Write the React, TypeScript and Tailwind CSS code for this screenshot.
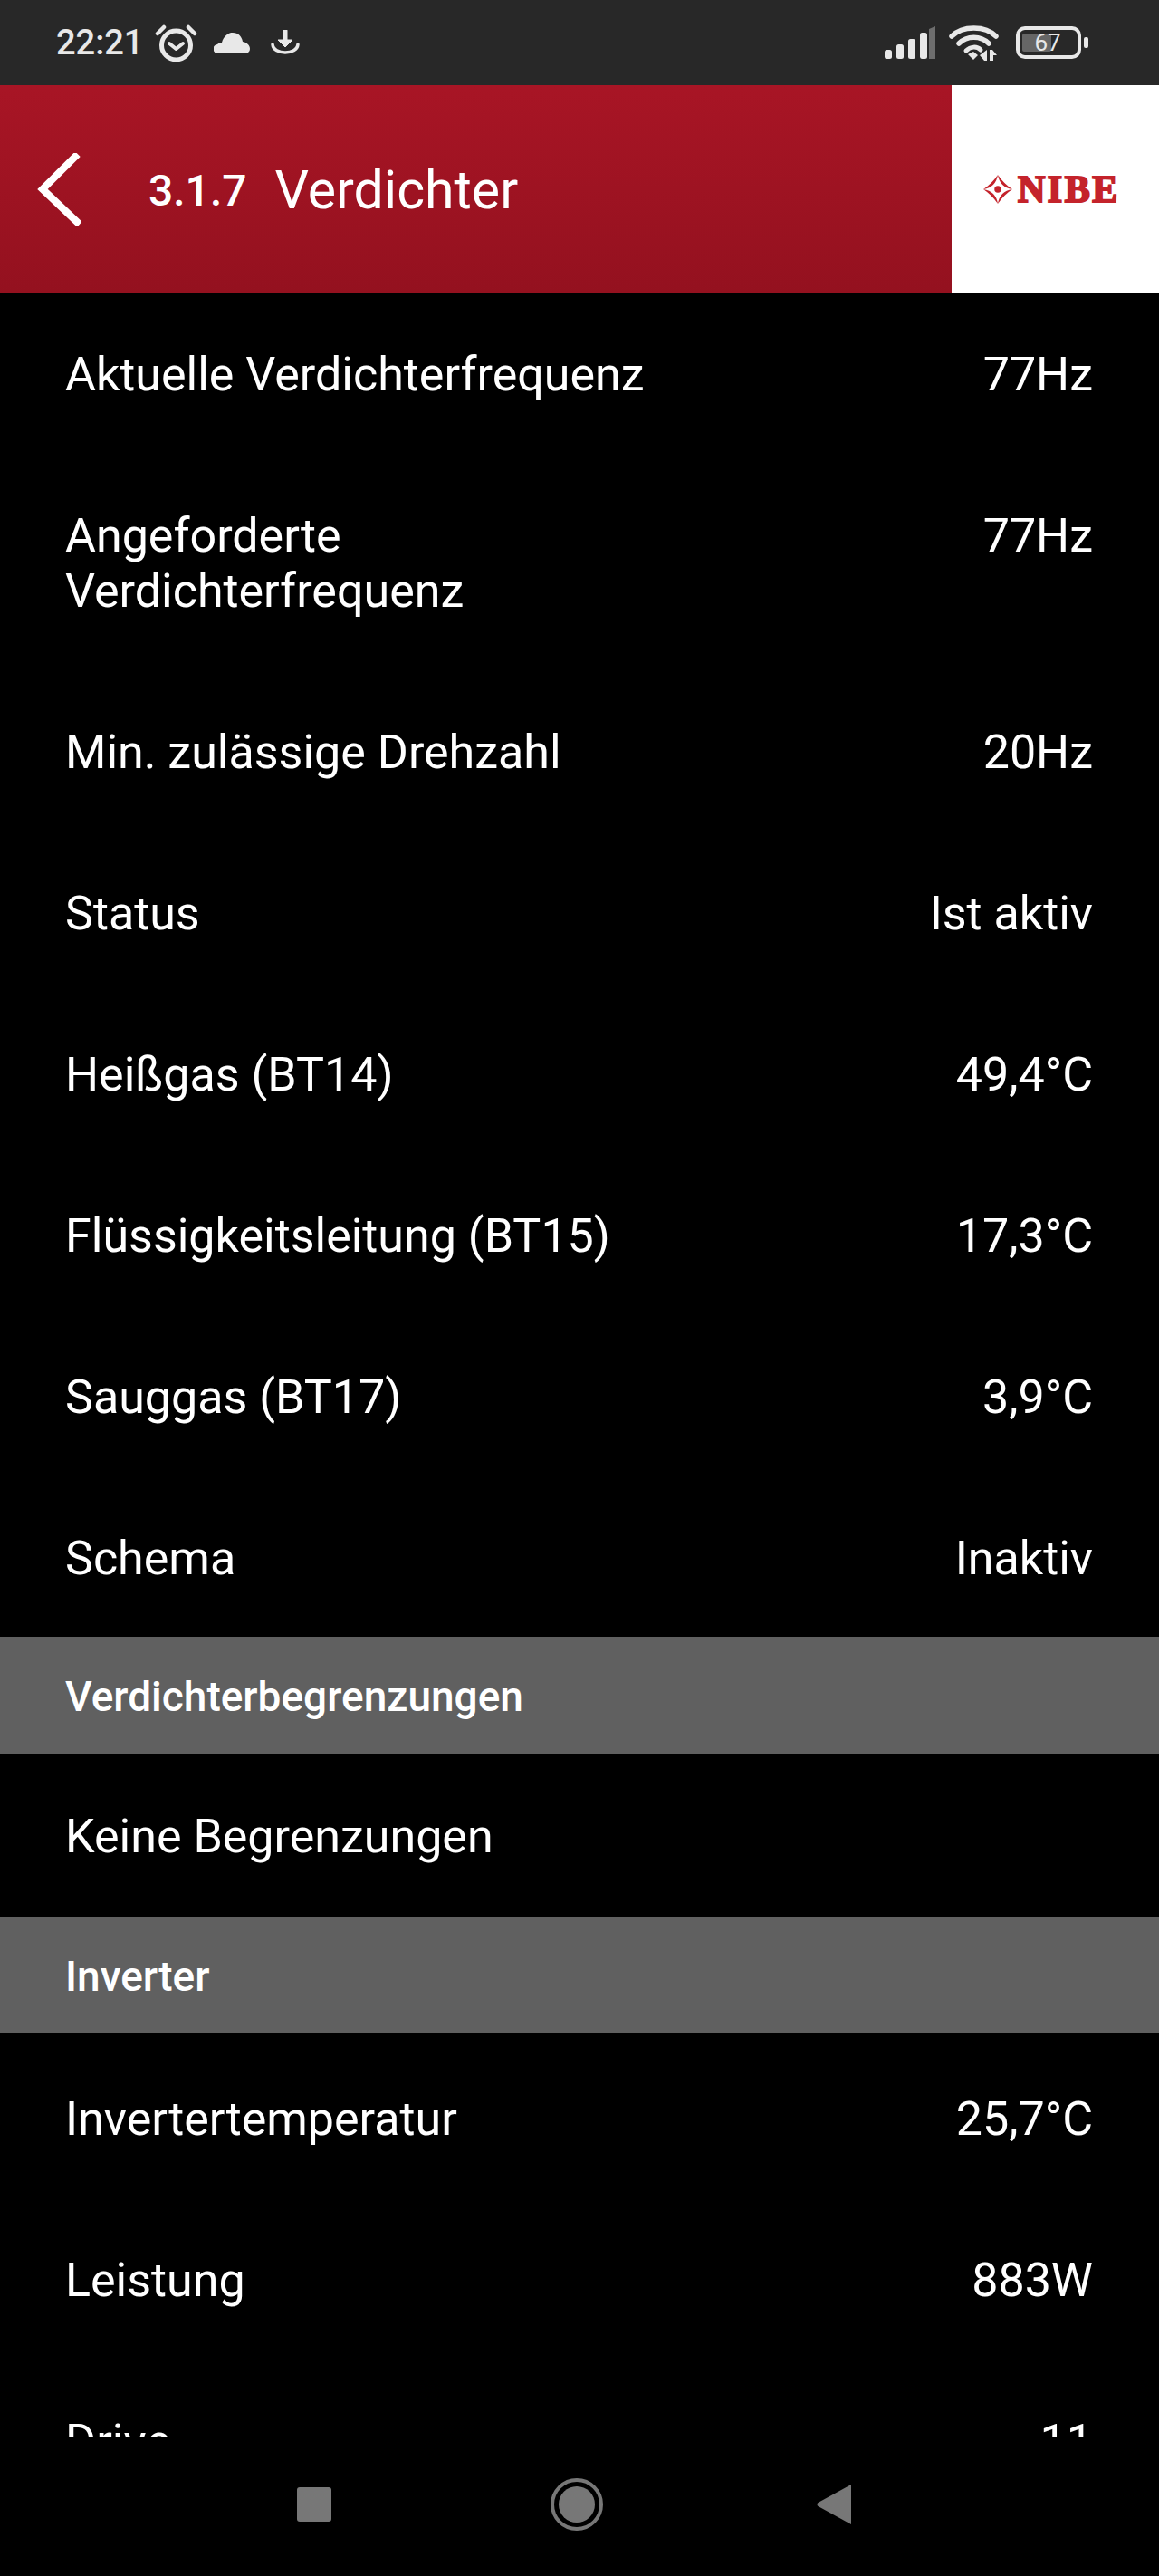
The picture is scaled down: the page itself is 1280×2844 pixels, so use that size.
import React from 'react';

interface Row {
  label: React.ReactNode;
  value?: string;
}

const rowsTop: Row[] = [
  { label: 'Aktuelle Verdichterfrequenz', value: '77Hz' },
  { label: 'Angeforderte Verdichterfrequenz', value: '77Hz' },
  { label: 'Min. zulässige Drehzahl', value: '20Hz' },
  { label: 'Status', value: 'Ist aktiv' },
  { label: 'Heißgas (BT14)', value: '49,4°C' },
  { label: 'Flüssigkeitsleitung (BT15)', value: '17,3°C' },
  { label: 'Sauggas (BT17)', value: '3,9°C' },
  { label: 'Schema', value: 'Inaktiv' },
];

const rowsInverter: Row[] = [
  { label: 'Invertertemperatur', value: '25,7°C' },
  { label: 'Leistung', value: '883W' },
  { label: 'Drive', value: '11' },
];

function DataRow({ label, value }: Row) {
  return (
    <div className="flex justify-between pl-[72px] pr-[73px] pt-[60px] pb-[57px] text-[52px] leading-[61px] text-white">
      <div className="max-w-[680px]">{label}</div>
      {value && <div>{value}</div>}
    </div>
  );
}

function SectionHeader({ title }: { title: string }) {
  return (
    <div className="flex items-center h-[129px] pl-[72px] pt-[4px] bg-[#606060] text-[46px] font-medium text-white">
      {title}
    </div>
  );
}

function StatusBar() {
  return (
    <div className="flex items-center justify-between h-[94px] pl-[62px] pr-[78px] bg-[#282828] text-[#e8e8e8]">
      <div className="flex items-center">
        <span className="text-[38px] leading-none font-medium">22:21</span>
        <svg className="ml-[13px]" width="47" height="43" viewBox="0 0 47 43" fill="none" stroke="#e8e8e8">
          <circle cx="23.5" cy="24" r="16" strokeWidth="5" />
          <path d="M16 22l7.500 6 7.500-6" strokeWidth="4" strokeLinecap="round" strokeLinejoin="round" />
          <path d="M3 11 10 4M44 11 37 4" strokeWidth="4.500" strokeLinecap="round" />
        </svg>
        <svg className="ml-[18px]" width="40" height="23" viewBox="0 0 40 23" fill="#e8e8e8">
          <path d="M5 23a5 5 0 0 1-1-10c1-1 3-2 5-2C11 4 16 0 21 0c6 0 10 4 11 10 5 1 8 4 8 8a5 5 0 0 1-5 5z" />
        </svg>
        <svg className="ml-[23px]" width="32" height="28" viewBox="0 0 32 28" fill="none" stroke="#e8e8e8">
          <path d="M16 1v11" strokeWidth="5" strokeLinecap="round" />
          <path d="M8 11h16l-8 8z" fill="#e8e8e8" strokeWidth="1" strokeLinejoin="round" />
          <path d="M2 16c1 12 27 12 28 0" strokeWidth="3.500" strokeLinecap="round" />
        </svg>
      </div>
      <div className="flex items-center">
        <svg width="56" height="36" viewBox="0 0 56 36" fill="#e8e8e8">
          <rect x="0" y="26" width="8" height="10" rx="2.500" />
          <rect x="13" y="20" width="8" height="16" rx="2.500" />
          <rect x="26" y="14" width="8" height="22" rx="2.500" />
          <rect x="39" y="7" width="8" height="29" rx="2.500" />
          <path d="M49 36V3l7-3v36z" fill="#6e6e6e" />
        </svg>
        <svg className="ml-[15px]" width="55" height="41" viewBox="0 0 55 41" fill="none" stroke="#e8e8e8">
          <path d="M3 13C15 1 40 1 52 13" strokeWidth="5.500" strokeLinecap="round" />
          <path d="M11 21C20 12 35 12 44 21" strokeWidth="5.500" strokeLinecap="round" />
          <path d="M19 29C24 24 31 24 35 28" strokeWidth="5" strokeLinecap="round" />
          <path d="M21 33l6-3 5 4-5 5z" fill="#e8e8e8" stroke="none" />
          <path d="M42 28v12h-3l-5-6zM45 40V28h3l5 6h-4v6z" fill="#e8e8e8" stroke="none" />
        </svg>
        <div className="relative ml-[19px] w-[72px] h-[36px] rounded-[10px] border-[4px] border-[#e8e8e8]">
          <div className="absolute left-[3px] top-[4px] bottom-[4px] w-[32px] bg-[#666] rounded-[2px]" />
          <span className="absolute inset-0 flex items-center justify-center text-[26px] leading-none text-[#e8e8e8] pr-[2px]">67</span>
        </div>
        <div className="ml-[3px] w-[5px] h-[12px] rounded-[2px] bg-[#e8e8e8]" />
      </div>
    </div>
  );
}

function Header() {
  return (
    <div className="flex h-[229px] bg-linear-to-b from-[#a81525] to-[#94111f]">
      <div className="flex flex-1 items-center">
        <svg className="ml-[41px]" width="48" height="80" viewBox="0 0 48 80" fill="none" stroke="white" strokeWidth="8" strokeLinecap="square">
          <path d="M42 4 6 40l38 36" />
        </svg>
        <span className="ml-[75px] pt-[4px] text-[48px] font-medium text-white">3.1.7</span>
        <span className="ml-[31px] pt-[4px] text-[59px] text-white">Verdichter</span>
      </div>
      <div className="flex items-center w-[229px] pl-[35px] bg-white">
        <svg width="32" height="32" viewBox="0 0 30 30" fill="#c4232b">
          <circle cx="15" cy="15" r="3.500" />
          <path d="M15 0Q13 13 0 15Q9 9 15 0z" />
          <path d="M15 0Q17 13 30 15Q21 9 15 0z" />
          <path d="M15 30Q13 17 0 15Q9 21 15 30z" />
          <path d="M15 30Q17 17 30 15Q21 21 15 30z" />
        </svg>
        <span className="ml-[6px] text-[42px] leading-none font-bold tracking-[2.500px] text-[#c4232b] [font-family:'Liberation_Serif',serif] [-webkit-text-stroke:2px_#c4232b]">
          NIBE
        </span>
      </div>
    </div>
  );
}

function NavBar() {
  return (
    <div className="flex items-center h-[154px] pb-[4px] bg-black">
      <div className="ml-[328px] w-[38px] h-[38px] rounded-[3px] bg-[#777]" />
      <div className="ml-[242px] flex items-center justify-center w-[58px] h-[58px] rounded-full border-[4px] border-[#777]">
        <div className="w-[40px] h-[40px] rounded-full bg-[#777]" />
      </div>
      <svg className="ml-[236px]" width="38" height="44" viewBox="0 0 38 44" fill="#777">
        <path d="M38 0v44L1.500 24a2.500 2.500 0 0 1 0-4z" />
      </svg>
    </div>
  );
}

export default function App() {
  return (
    <div className="flex flex-col w-[1280px] h-[2844px] bg-black font-['Roboto',sans-serif]">
      <StatusBar />
      <Header />
      <div className="flex-1 overflow-hidden">
        <div className="-mb-[1px]">
          {rowsTop.map((row, i) => (
            <DataRow key={i} {...row} />
          ))}
        </div>
        <SectionHeader title="Verdichterbegrenzungen" />
        <div className="py-[1px]">
          <DataRow label="Keine Begrenzungen" />
        </div>
        <SectionHeader title="Inverter" />
        <div className="pt-[4px]">
          {rowsInverter.map((row, i) => (
            <DataRow key={i} {...row} />
          ))}
        </div>
      </div>
      <NavBar />
    </div>
  );
}
